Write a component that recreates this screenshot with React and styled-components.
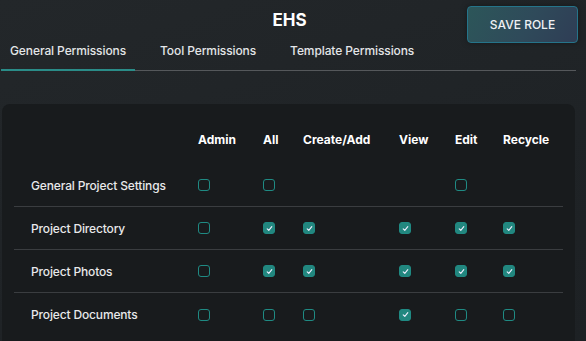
import React from 'react';
import styled, { createGlobalStyle } from 'styled-components';

const columns = ['Admin', 'All', 'Create/Add', 'View', 'Edit', 'Recycle'];

// null = no checkbox in that column
const rows = [
  { name: 'General Project Settings', perms: [false, false, null, null, false, null] },
  { name: 'Project Directory', perms: [false, true, true, true, true, true] },
  { name: 'Project Photos', perms: [false, true, true, true, true, true] },
  { name: 'Project Documents', perms: [false, false, false, true, false, false] },
];

const tabs = ['General Permissions', 'Tool Permissions', 'Template Permissions'];

const Checkbox = ({ checked }) => (
  <Box $checked={checked}>
    {checked && (
      <svg width="9" height="9" viewBox="0 0 9 9">
        <path d="M2.2 4.9 L3.8 6.4 L6.8 2.6" fill="none" stroke="#eef" strokeWidth="1.1" strokeLinecap="round" strokeLinejoin="round" />
      </svg>
    )}
  </Box>
);

const App = () => {
  return (
    <>
      <GlobalStyle />
      <Page>
        <TopBar>
          <span />
          <Title>EHS</Title>
          <SaveButton>SAVE ROLE</SaveButton>
        </TopBar>
        <Tabs>
          {tabs.map((t, i) => (
            <Tab key={t} $active={i === 0}>{t}</Tab>
          ))}
        </Tabs>
        <Card>
          <HeaderRow>
            <span />
            {columns.map((c) => (
              <HeadCell key={c}>{c}</HeadCell>
            ))}
          </HeaderRow>
          {rows.map((r) => (
            <Row key={r.name}>
              <Label>{r.name}</Label>
              {r.perms.map((p, i) => (
                <Cell key={i}>{p !== null && <Checkbox checked={p} />}</Cell>
              ))}
            </Row>
          ))}
        </Card>
      </Page>
    </>
  );
};

export default App;

const GlobalStyle = createGlobalStyle`
  html, body {
    margin: 0;
    padding: 0;
    height: 100%;
    background: #202427;
    font-family: Inter, "Liberation Sans", sans-serif;
    overflow: hidden;
  }
`;

const Page = styled.div`
  display: flex;
  flex-direction: column;
  height: 341px;
  padding: 0 8px 0 1px;
  background: linear-gradient(160deg, #23272a 0%, #1f2326 60%, #1d2124 100%);
  box-sizing: border-box;
  overflow: hidden;
`;

const TopBar = styled.div`
  display: grid;
  grid-template-columns: 1fr auto 1fr;
  align-items: start;
  padding-top: 6px;
  height: 44px;
  box-sizing: border-box;
`;

const Title = styled.h1`
  margin: 5px 0 0 0;
  font-size: 17px;
  font-weight: 700;
  color: #ffffff;
  line-height: 18px;
`;

const SaveButton = styled.button`
  justify-self: end;
  width: 111px;
  height: 37px;
  border-radius: 4px;
  border: 1px solid #25748a;
  background: linear-gradient(120deg, #2c5659 0%, #2f4a5a 55%, #2f3d55 100%);
  color: #eef1f3;
  font-family: Inter, "Liberation Sans", sans-serif;
  font-size: 12px;
  font-weight: 500;
  box-shadow: 0 0 6px rgba(0, 0, 0, 0.35);
  cursor: pointer;
`;

const Tabs = styled.div`
  display: flex;
  gap: 16px;
  margin-right: 2px;
  border-bottom: 1px solid #55585b;
`;

const Tab = styled.div`
  padding: 0 9px;
  height: 27px;
  line-height: 14px;
  font-size: 12px;
  font-weight: 500;
  letter-spacing: -0.1px;
  color: #e4e6e8;
  margin-bottom: -1px;
  border-bottom: 2px solid ${(p) => (p.$active ? '#2a8c88' : 'transparent')};
  box-sizing: border-box;
`;

const Card = styled.div`
  flex: 1;
  margin: 33px 3px 0 1px;
  padding: 19px 12px 0 12px;
  background: #181b1d;
  border-radius: 8px 8px 0 0;
  box-sizing: border-box;
`;

const grid = `
  display: grid;
  grid-template-columns: 184px 65px 40px 96px 56px 48px 1fr;
  align-items: center;
  box-sizing: border-box;
`;

const HeaderRow = styled.div`
  ${grid}
  height: 32px;
  margin-bottom: 9px;
`;

const HeadCell = styled.div`
  font-size: 12px;
  font-weight: 700;
  color: #ffffff;
`;

const Row = styled.div`
  ${grid}
  height: 43px;
  border-bottom: 1px solid #3a3d40;
  &:last-child {
    border-bottom: none;
  }
`;

const Label = styled.div`
  padding-left: 17px;
  font-size: 12px;
  font-weight: 500;
  letter-spacing: -0.15px;
  color: #e8e9ea;
`;

const Cell = styled.div`
  display: flex;
  align-items: center;
`;

const Box = styled.div`
  width: 12px;
  height: 12px;
  box-sizing: border-box;
  border-radius: 3px;
  border: 1.5px solid #1f8a83;
  background: ${(p) => (p.$checked ? '#22877f' : 'transparent')};
  display: flex;
  align-items: center;
  justify-content: center;
`;
